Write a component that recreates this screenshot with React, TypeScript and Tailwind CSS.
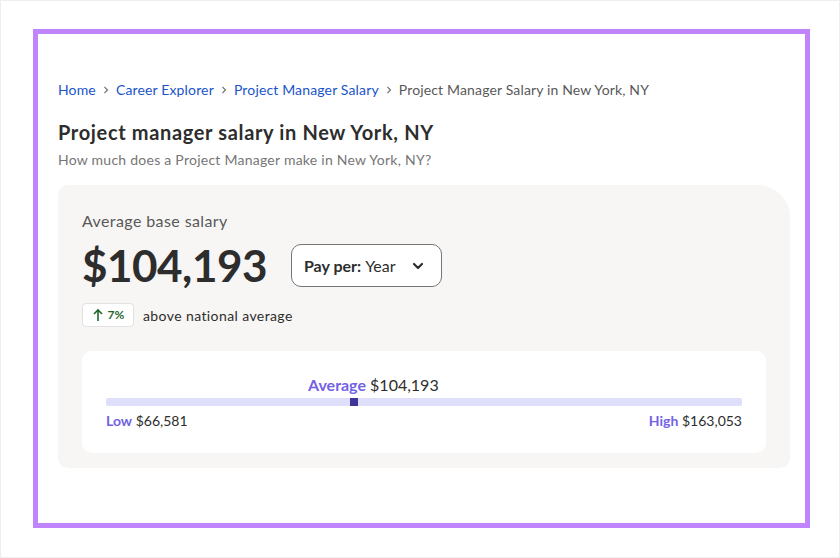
import React from 'react';

const salary = {
  average: 104193,
  low: 66581,
  high: 163053,
  aboveNational: 7,
};

const fmt = (n: number) => `$${n.toLocaleString('en-US')}`;

const Sep: React.FC = () => (
  <svg width="10" height="10" viewBox="0 0 10 10" className="mx-[5px] shrink-0">
    <path d="M3.5 2 L6.5 5 L3.5 8" fill="none" stroke="#767676" strokeWidth="1.2" />
  </svg>
);

const App: React.FC = () => {
  const pct = ((salary.average - salary.low) / (salary.high - salary.low)) * 100;

  return (
    <div
      className="w-[840px] h-[558px] border border-[#eeeeee] bg-white pl-[32px] pt-[28px] text-[#2d2d2d]"
      style={{ fontFamily: 'Lato, "Noto Sans", sans-serif' }}
    >
      <div className="w-[777px] h-[499px] border-[5px] border-[#c084fc] pl-[20px] pr-[15px] pt-[46px]">
        {/* Breadcrumb */}
        <nav className="flex items-center text-[14px] leading-[20px] tracking-[0.15px]">
          <a className="text-[#1a55c8]">Home</a>
          <Sep />
          <a className="text-[#1a55c8]">Career Explorer</a>
          <Sep />
          <a className="text-[#1a55c8]">Project Manager Salary</a>
          <Sep />
          <span className="text-[#595959]">Project Manager Salary in New York, NY</span>
        </nav>

        <h1 className="mt-[18px] text-[20px] leading-[28px] font-bold tracking-[0.65px]">
          Project manager salary in New York, NY
        </h1>
        <p className="mt-[4px] text-[14px] leading-[20px] tracking-[0.25px] text-[#767676]">
          How much does a Project Manager make in New York, NY?
        </p>

        {/* Salary card */}
        <div className="mt-[15px] bg-[#f7f6f4] rounded-tl-[10px] rounded-tr-[32px] rounded-b-[10px] px-[24px] pt-[24px] pb-[15px]">
          <div className="text-[16px] leading-[24px] tracking-[0.4px] text-[#595959]">Average base salary</div>

          <div className="mt-[11px] flex items-center h-[43px]">
            <div className="text-[44px] leading-[43px] font-bold tracking-[-0.5px] text-[#2d2d2d]">
              {fmt(salary.average)}
            </div>
            <button className="ml-[24px] h-[43px] w-[151px] flex items-center rounded-[10px] border border-[#767676] bg-white pl-[12px] text-[16px]">
              <span className="font-bold">Pay per:</span>
              <span className="ml-[4px]">Year</span>
              <svg width="14" height="14" viewBox="0 0 14 14" className="ml-auto mr-[16px]">
                <path d="M3 5 L7 9 L11 5" fill="none" stroke="#2d2d2d" strokeWidth="2.2" strokeLinecap="round" strokeLinejoin="round" />
              </svg>
            </button>
          </div>

          <div className="mt-[16px] flex items-center">
            <div className="h-[24px] w-[52px] flex items-center justify-center gap-[4px] rounded-[4px] border border-[#e4e2e0] bg-white text-[#1f662c]">
              <svg width="12" height="14" viewBox="0 0 12 14">
                <path d="M6 13 V2 M2 6 L6 2 L10 6" fill="none" stroke="#1f662c" strokeWidth="1.6" />
              </svg>
              <span className="text-[12px] font-bold">{salary.aboveNational}%</span>
            </div>
            <span className="ml-[9px] text-[14px] tracking-[0.4px] text-[#2d2d2d]">above national average</span>
          </div>

          {/* Range */}
          <div className="mt-[24px] bg-white rounded-[10px] px-[24px] pt-[24px] pb-[22px]">
            <div className="text-[16px] leading-[20px] whitespace-nowrap" style={{ marginLeft: `calc(${pct}% - 46px)` }}>
              <span className="font-bold text-[#7262e6]">Average</span>{' '}
              <span className="text-[#2d2d2d]">{fmt(salary.average)}</span>
            </div>
            <div className="relative mt-[3px] h-[8px] bg-[#e0dffb] rounded-[2px]">
              <div
                className="absolute top-0 h-[8px] w-[8px] bg-[#3f3599] -translate-x-1/2"
                style={{ left: `${pct}%` }}
              />
            </div>
            <div className="mt-[5px] flex justify-between text-[14px] leading-[20px]">
              <div>
                <span className="font-bold text-[#7262e6]">Low</span> {fmt(salary.low)}
              </div>
              <div>
                <span className="font-bold text-[#7262e6]">High</span> {fmt(salary.high)}
              </div>
            </div>
          </div>
        </div>
      </div>
    </div>
  );
};

export default App;
